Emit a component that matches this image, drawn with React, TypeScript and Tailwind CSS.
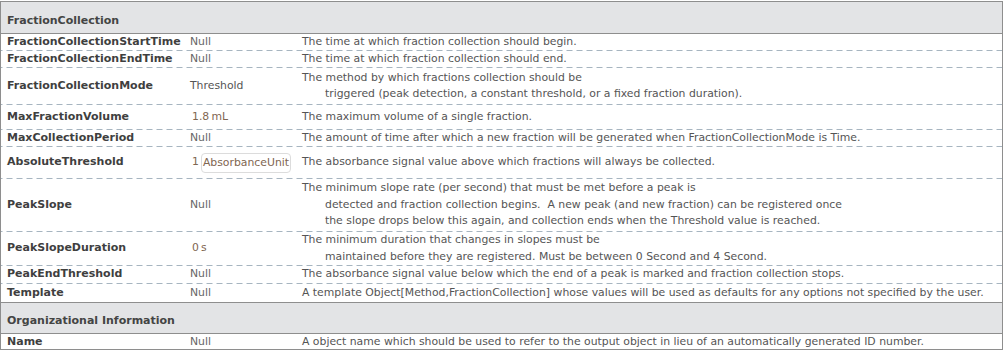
import React from "react";

type Row = {
  name: string;
  value: React.ReactNode;
  desc: string[];
  h: string;
  last?: boolean;
};

const Qty = ({ children }: { children: React.ReactNode }) => (
  <span className="pl-0.5 text-[#7f6651]">{children}</span>
);

const Null = () => <span className="text-[#666]">Null</span>;

const dashed =
  "bg-[linear-gradient(to_right,#a7b5c0_6px,transparent_6px)] bg-[length:10px_1px] bg-bottom bg-repeat-x";

const fractionRows: Row[] = [
  {
    name: "FractionCollectionStartTime",
    value: <Null />,
    desc: ["The time at which fraction collection should begin."],
    h: "h-[17px]",
  },
  {
    name: "FractionCollectionEndTime",
    value: <Null />,
    desc: ["The time at which fraction collection should end."],
    h: "h-[17px]",
  },
  {
    name: "FractionCollectionMode",
    value: <span className="text-[#555]">Threshold</span>,
    desc: [
      "The method by which fractions collection should be",
      "triggered (peak detection, a constant threshold, or a fixed fraction duration).",
    ],
    h: "h-[37px]",
  },
  {
    name: "MaxFractionVolume",
    value: <Qty>1.8&#8201;mL</Qty>,
    desc: ["The maximum volume of a single fraction."],
    h: "h-[25px]",
  },
  {
    name: "MaxCollectionPeriod",
    value: <Null />,
    desc: [
      "The amount of time after which a new fraction will be generated when FractionCollectionMode is Time.",
    ],
    h: "h-[17px]",
  },
  {
    name: "AbsoluteThreshold",
    value: (
      <span className="flex items-center text-[#7f6651]">
        <span className="pl-0.5 pr-[2px]">1</span>
        <span className="rounded-[4px] border border-[#dcdcdc] px-px leading-[18px]">
          AbsorbanceUnit
        </span>
      </span>
    ),
    desc: ["The absorbance signal value above which fractions will always be collected."],
    h: "h-[32px]",
  },
  {
    name: "PeakSlope",
    value: <Null />,
    desc: [
      "The minimum slope rate (per second) that must be met before a peak is",
      "detected and fraction collection begins.\u00a0 A new peak (and new fraction) can be registered once",
      "the slope drops below this again, and collection ends when the Threshold value is reached.",
    ],
    h: "h-[53px]",
  },
  {
    name: "PeakSlopeDuration",
    value: <Qty>0&#8201;s</Qty>,
    desc: [
      "The minimum duration that changes in slopes must be",
      "maintained before they are registered. Must be between 0 Second and 4 Second.",
    ],
    h: "h-[34px]",
  },
  {
    name: "PeakEndThreshold",
    value: <Null />,
    desc: [
      "The absorbance signal value below which the end of a peak is marked and fraction collection stops.",
    ],
    h: "h-[18px]",
  },
  {
    name: "Template",
    value: <Null />,
    desc: [
      "A template Object[Method,FractionCollection] whose values will be used as defaults for any options not specified by the user.",
    ],
    h: "h-[18px]",
    last: true,
  },
];

const orgRows: Row[] = [
  {
    name: "Name",
    value: <Null />,
    desc: [
      "A object name which should be used to refer to the output object in lieu of an automatically generated ID number.",
    ],
    h: "h-[15px]",
    last: true,
  },
];

const SectionHeader = ({ title, h }: { title: string; h: string }) => (
  <div
    className={`flex items-center border-b border-[#8e8e8e] bg-[#e3e4e6] pl-1.5 pt-[7px] font-bold text-[#444] ${h}`}
  >
    {title}
  </div>
);

const OptionRow = ({ row }: { row: Row }) => (
  <div
    className={`grid grid-cols-[183px_112px_1fr] items-center ${row.h} ${
      row.last ? "" : `${dashed} pb-px`
    }`}
  >
    <div className="whitespace-nowrap pl-1.5 font-bold text-[#3f3f3f]">{row.name}</div>
    <div className="whitespace-nowrap pl-1.5 text-[10.85px]">{row.value}</div>
    <div className="pl-1.5 text-[10.85px] leading-[16.5px] text-[#555]">
      {row.desc.map((line, i) => (
        <div key={i} className={i > 0 ? "whitespace-nowrap pl-[23px]" : "whitespace-nowrap"}>
          {line}
        </div>
      ))}
    </div>
  </div>
);

export default function App() {
  return (
    <div className="h-[354px] w-[1004px] bg-white pt-px font-['DejaVu_Sans',sans-serif] text-[11px]">
      <div className="w-[1003px] border border-[#8e8e8e]">
        <SectionHeader title="FractionCollection" h="h-[32px]" />
        {fractionRows.map((r) => (
          <OptionRow key={r.name} row={r} />
        ))}
        <div className="border-t border-[#8e8e8e]">
          <SectionHeader title="Organizational Information" h="h-[31px]" />
        </div>
        {orgRows.map((r) => (
          <OptionRow key={r.name} row={r} />
        ))}
      </div>
    </div>
  );
}
